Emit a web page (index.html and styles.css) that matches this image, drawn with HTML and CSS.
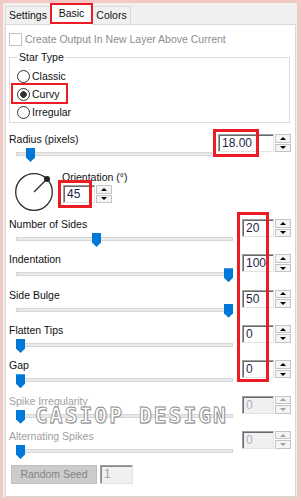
FILE: index.html
```html
<!DOCTYPE html>
<html lang="en">
<head>
    <meta charset="UTF-8">
    <meta name="viewport" content="width=device-width, initial-scale=1.0">
    <title>Star Shape - Basic</title>
    <link rel="stylesheet" href="styles.css">
</head>
<body>
<div class="frame">
    <div class="window">
        <div class="tabs">
            <div class="tab tab-settings">Settings</div>
            <div class="tab tab-basic active">Basic</div>
            <div class="tab tab-colors">Colors</div>
        </div>
        <div class="panel">
            <div class="check disabled"><span class="box"></span>Create Output In New Layer Above Current</div>

            <fieldset class="group">
                <legend>Star Type</legend>
                <div class="radio"><span class="dot"></span>Classic</div>
                <div class="radio checked"><span class="dot"></span>Curvy</div>
                <div class="radio"><span class="dot"></span>Irregular</div>
            </fieldset>

            <div class="param param-radius">
                <div class="param-body">
                    <div class="param-label">Radius (pixels)</div>
                    <div class="slider"><div class="track"></div><div class="thumb" style="left:10px"></div></div>
                </div>
                <div class="spin spin-wide"><div class="spin-val">18.00</div><div class="spin-btns"><span class="arr up"></span><span class="arr down"></span></div></div>
            </div>

            <div class="dial-row">
                <svg class="dial" width="40" height="40" viewBox="0 0 40 40">
                    <circle cx="20" cy="20" r="18.3" fill="none" stroke="#2b2b2b" stroke-width="1.3"/>
                    <line x1="20" y1="20" x2="33" y2="7" stroke="#2b2b2b" stroke-width="1.3"/>
                    <circle cx="33" cy="7" r="3" fill="#222"/>
                </svg>
                <div class="dial-side">
                    <div class="param-label">Orientation (°)</div>
                    <div class="spin spin-dial"><div class="spin-val">45</div><div class="spin-btns"><span class="arr up"></span><span class="arr down"></span></div></div>
                </div>
            </div>

            <div class="params">
                <div class="param">
                    <div class="param-body">
                        <div class="param-label">Number of Sides</div>
                        <div class="slider"><div class="track"></div><div class="thumb" style="left:76px"></div></div>
                    </div>
                    <div class="spin"><div class="spin-val">20</div><div class="spin-btns"><span class="arr up"></span><span class="arr down"></span></div></div>
                </div>
                <div class="param">
                    <div class="param-body">
                        <div class="param-label">Indentation</div>
                        <div class="slider"><div class="track"></div><div class="thumb" style="left:208px"></div></div>
                    </div>
                    <div class="spin"><div class="spin-val">100</div><div class="spin-btns"><span class="arr up"></span><span class="arr down"></span></div></div>
                </div>
                <div class="param">
                    <div class="param-body">
                        <div class="param-label">Side Bulge</div>
                        <div class="slider"><div class="track"></div><div class="thumb" style="left:208px"></div></div>
                    </div>
                    <div class="spin"><div class="spin-val">50</div><div class="spin-btns"><span class="arr up"></span><span class="arr down"></span></div></div>
                </div>
                <div class="param">
                    <div class="param-body">
                        <div class="param-label">Flatten Tips</div>
                        <div class="slider"><div class="track"></div><div class="thumb" style="left:0px"></div></div>
                    </div>
                    <div class="spin"><div class="spin-val">0</div><div class="spin-btns"><span class="arr up"></span><span class="arr down"></span></div></div>
                </div>
                <div class="param">
                    <div class="param-body">
                        <div class="param-label">Gap</div>
                        <div class="slider"><div class="track"></div><div class="thumb" style="left:0px"></div></div>
                    </div>
                    <div class="spin"><div class="spin-val">0</div><div class="spin-btns"><span class="arr up"></span><span class="arr down"></span></div></div>
                </div>
                <div class="param disabled">
                    <div class="param-body">
                        <div class="param-label">Spike Irregularity</div>
                        <div class="slider"><div class="track"></div><div class="thumb" style="left:0px"></div></div>
                    </div>
                    <div class="spin"><div class="spin-val">0</div><div class="spin-btns"><span class="arr up"></span><span class="arr down"></span></div></div>
                </div>
                <div class="param disabled">
                    <div class="param-body">
                        <div class="param-label">Alternating Spikes</div>
                        <div class="slider"><div class="track"></div><div class="thumb" style="left:0px"></div></div>
                    </div>
                    <div class="spin"><div class="spin-val">0</div><div class="spin-btns"><span class="arr up"></span><span class="arr down"></span></div></div>
                </div>
            </div>

            <div class="seed-row">
                <div class="seed-btn">Random Seed</div>
                <div class="seed-val">1</div>
            </div>
        </div>
    </div>

    <!-- annotation marks and watermark -->
    <div class="mark mark-basic"></div>
    <div class="mark mark-curvy"></div>
    <div class="mark mark-radius"></div>
    <div class="mark mark-dial"></div>
    <div class="mark mark-column"></div>
    <div class="watermark">CASIOP DESIGN</div>
</div>
</body>
</html>
```

FILE: styles.css
```css
body {
    margin: 0;
    background: #f3c9c6;
    font-family: "Liberation Sans", Arial, sans-serif;
    font-size: 10.5px;
    color: #111;
}
.frame {
    position: relative;
    width: 301px;
    height: 501px;
    box-sizing: border-box;
    padding: 3px 4px 4px 3px;
    background: #f3c9c6;
}
.window {
    height: 100%;
    display: flex;
    flex-direction: column;
    background: #f0f0f0;
}
.tabs {
    height: 21px;
    flex-shrink: 0;
    display: flex;
    align-items: flex-end;
    padding-left: 2px;
}
.tab {
    height: 18px;
    box-sizing: border-box;
    border: 1px solid #d9d9d9;
    border-bottom: none;
    line-height: 16px;
    text-align: center;
    background: #f0f0f0;
}
.tab-settings {
    width: 45px;
    border-right: none;
}
.tab-basic {
    position: relative;
    width: 43px;
    height: 22px;
    margin-bottom: -1px;
    padding-top: 1px;
    background: #fff;
}
.tab-colors {
    width: 38px;
    border-left: none;
}
.panel {
    flex: 1;
    margin: 0 1px 0 2px;
    border: 1px solid #d9d9d9;
    background: #fff;
}
.check {
    display: flex;
    align-items: center;
    height: 13px;
    margin: 8px 0 0 3px;
    line-height: 13px;
    color: #8d8d8d;
}
.check .box {
    width: 13px;
    height: 13px;
    box-sizing: border-box;
    border: 1px solid #c2c2c2;
    background: #fff;
    margin-right: 3px;
}
.group {
    margin: 5px 5px 0 3px;
    padding: 4px 0 1px 7px;
    border: 1px solid #dcdcdc;
    min-width: 0;
}
.group legend {
    padding: 0 1px;
    margin-left: 1px;
    line-height: 12px;
}
.radio {
    display: flex;
    align-items: center;
    height: 18px;
}
.radio .dot {
    width: 13px;
    height: 13px;
    box-sizing: border-box;
    border: 1px solid #333;
    border-radius: 50%;
    background: #fff;
    margin-right: 2px;
}
.radio.checked .dot {
    background: radial-gradient(circle, #333 3px, #fff 3.6px);
}
.param {
    display: flex;
    height: 35.33px;
    padding-right: 4px;
}
.param-radius {
    height: auto;
    margin-top: 10px;
}
.param-body {
    flex: 1;
    min-width: 0;
}
.param-label {
    padding-left: 3px;
    line-height: 13px;
    white-space: nowrap;
}
.param.disabled .param-label {
    color: #a0a0a0;
}
.slider {
    position: relative;
    height: 16px;
    margin: 0 9px 0 10px;
}
.param-radius .slider {
    margin-right: 6px;
}
.track {
    position: absolute;
    left: 0;
    right: 0;
    top: 6px;
    height: 4px;
    box-sizing: border-box;
    background: #e7eaea;
    border: 1px solid #d6d6d6;
}
.thumb {
    position: absolute;
    top: 2px;
    width: 9px;
    height: 14px;
    background: #0078d7;
    clip-path: polygon(0 0, 100% 0, 100% 68%, 50% 100%, 0 68%);
}
.spin {
    display: flex;
    gap: 1px;
    margin-top: 1px;
}
.spin-val {
    width: 32px;
    height: 18px;
    box-sizing: border-box;
    border: 1px solid;
    border-color: #a0a0a0 #e3e3e3 #e3e3e3 #a0a0a0;
    box-shadow: inset 1px 1px 0 #696969;
    padding-left: 3px;
    font-size: 12px;
    line-height: 16px;
    color: #1e1f4c;
    background: #fff;
}
.spin-wide .spin-val {
    width: 56px;
}
.param.disabled .spin-val {
    background: #f0f0f0;
    color: #a9b2c8;
}
.spin-btns {
    width: 16px;
    height: 18px;
    display: flex;
    flex-direction: column;
    gap: 1px;
}
.arr {
    flex: 1;
    display: flex;
    align-items: center;
    justify-content: center;
    border: 1px solid #c4c4c4;
    background: #f4f4f4;
}
.arr::before {
    content: "";
    border-left: 3px solid transparent;
    border-right: 3px solid transparent;
}
.up::before {
    border-bottom: 3px solid #000;
}
.down::before {
    border-top: 3px solid #000;
}
.param.disabled .up::before {
    border-bottom-color: #a0a0a0;
}
.param.disabled .down::before {
    border-top-color: #a0a0a0;
}
.dial-row {
    display: flex;
    margin-top: 9px;
}
.dial {
    margin: 1px 0 0 8px;
}
.dial-side {
    margin-left: 8px;
}
.dial-side .param-label {
    padding-left: 0;
}
.spin-dial {
    margin-left: 1px;
}
.params {
    margin-top: 6px;
}
.seed-row {
    display: flex;
    gap: 3px;
    margin-left: 5px;
}
.seed-btn {
    width: 86px;
    height: 19px;
    box-sizing: border-box;
    border: 1px solid #bfbfbf;
    background: #cccccc;
    color: #838383;
    line-height: 17px;
    text-align: center;
}
.seed-val {
    width: 33px;
    height: 19px;
    box-sizing: border-box;
    border: 1px solid;
    border-color: #a0a0a0 #e3e3e3 #e3e3e3 #a0a0a0;
    box-shadow: inset 1px 1px 0 #8a8a8a;
    background: #f0f0f0;
    padding-left: 3px;
    font-size: 12px;
    line-height: 17px;
    color: #9aa0b4;
}
.mark {
    position: absolute;
    box-sizing: border-box;
    border: 3px solid #ec1c24;
}
.mark-basic {
    left: 50px;
    top: 3px;
    width: 43px;
    height: 21px;
    border-width: 2px;
}
.mark-curvy {
    left: 11px;
    top: 83px;
    width: 57px;
    height: 21px;
    border-width: 2px;
}
.mark-radius {
    left: 213px;
    top: 129px;
    width: 46px;
    height: 28px;
}
.mark-dial {
    left: 58px;
    top: 180px;
    width: 34px;
    height: 28px;
}
.mark-column {
    left: 237px;
    top: 212px;
    width: 32px;
    height: 170px;
}
.watermark {
    position: absolute;
    left: 35px;
    top: 409px;
    font-family: "DejaVu Sans Mono", monospace;
    font-weight: bold;
    font-size: 21px;
    line-height: 15px;
    letter-spacing: 2.2px;
    color: #fff;
    -webkit-text-stroke: 0.8px #8a8a8a;
    text-shadow: 1px 1px 0 #d2d2d2;
    white-space: nowrap;
}
```
